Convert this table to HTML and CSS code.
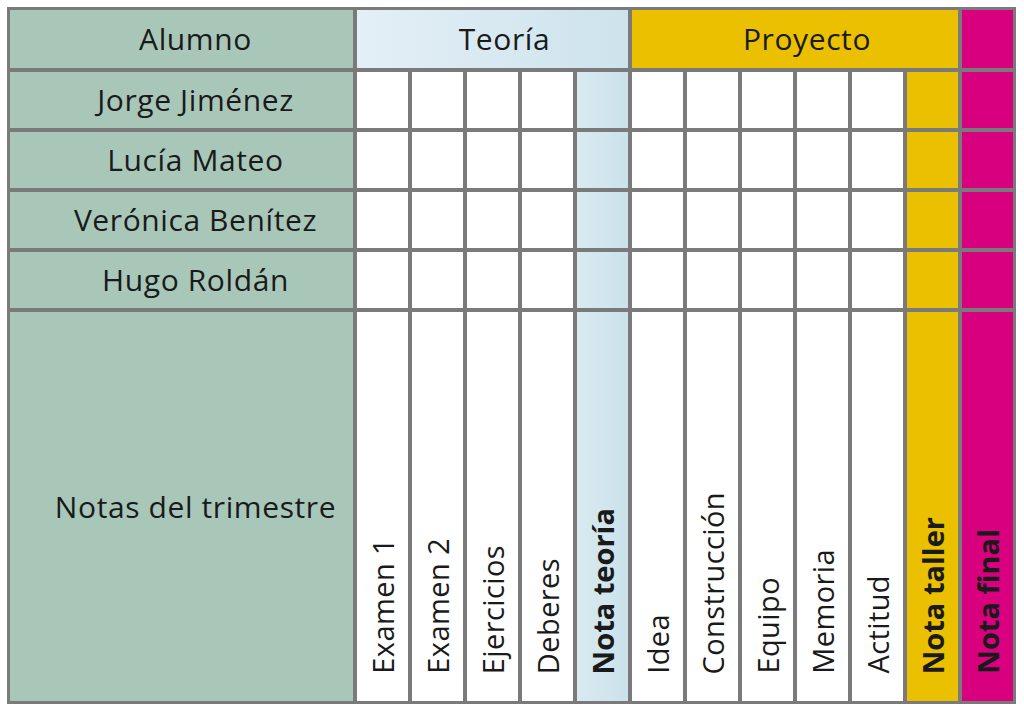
FILE: index.html
```html
<!DOCTYPE html>
<html lang="es">
<head>
<meta charset="utf-8">
<title>Notas del trimestre</title>
<link rel="stylesheet" href="styles.css">
</head>
<body>
<div class="grades">
  <div class="cell name head">Alumno</div>
  <div class="cell teoria-head head">Teoría</div>
  <div class="cell proyecto-head head">Proyecto</div>
  <div class="cell final"></div>

  <div class="cell name">Jorge Jiménez</div>
  <div class="cell"></div><div class="cell"></div><div class="cell"></div><div class="cell"></div>
  <div class="cell teoria"></div>
  <div class="cell"></div><div class="cell"></div><div class="cell"></div><div class="cell"></div><div class="cell"></div>
  <div class="cell taller"></div>
  <div class="cell final"></div>

  <div class="cell name">Lucía Mateo</div>
  <div class="cell"></div><div class="cell"></div><div class="cell"></div><div class="cell"></div>
  <div class="cell teoria"></div>
  <div class="cell"></div><div class="cell"></div><div class="cell"></div><div class="cell"></div><div class="cell"></div>
  <div class="cell taller"></div>
  <div class="cell final"></div>

  <div class="cell name">Verónica Benítez</div>
  <div class="cell"></div><div class="cell"></div><div class="cell"></div><div class="cell"></div>
  <div class="cell teoria"></div>
  <div class="cell"></div><div class="cell"></div><div class="cell"></div><div class="cell"></div><div class="cell"></div>
  <div class="cell taller"></div>
  <div class="cell final"></div>

  <div class="cell name">Hugo Roldán</div>
  <div class="cell"></div><div class="cell"></div><div class="cell"></div><div class="cell"></div>
  <div class="cell teoria"></div>
  <div class="cell"></div><div class="cell"></div><div class="cell"></div><div class="cell"></div><div class="cell"></div>
  <div class="cell taller"></div>
  <div class="cell final"></div>

  <div class="cell name">Notas del trimestre</div>
  <div class="cell vcell"><span class="vtext">Examen 1</span></div>
  <div class="cell vcell"><span class="vtext">Examen 2</span></div>
  <div class="cell vcell"><span class="vtext">Ejercicios</span></div>
  <div class="cell vcell"><span class="vtext">Deberes</span></div>
  <div class="cell vcell teoria"><span class="vtext bold">Nota teoría</span></div>
  <div class="cell vcell"><span class="vtext">Idea</span></div>
  <div class="cell vcell"><span class="vtext">Construcción</span></div>
  <div class="cell vcell"><span class="vtext">Equipo</span></div>
  <div class="cell vcell"><span class="vtext">Memoria</span></div>
  <div class="cell vcell"><span class="vtext">Actitud</span></div>
  <div class="cell vcell taller"><span class="vtext bold">Nota taller</span></div>
  <div class="cell vcell final"><span class="vtext bold">Nota final</span></div>
</div>
</body>
</html>
```
FILE: styles.css
```css
html, body {
  margin: 0;
  padding: 0;
  background: #ffffff;
}
body {
  padding: 7px;
  font-family: "Open Sans", "Noto Sans", sans-serif;
  color: #1a1a1a;
}
.grades {
  display: grid;
  grid-template-columns: 343px repeat(12, 51px);
  grid-template-rows: 58px repeat(4, 56px) 389px;
  gap: 4px;
  padding: 3px;
  width: max-content;
  background: #7a7a7a;
}
.cell {
  background: #ffffff;
}
.name {
  background: #a8c7b9;
  display: flex;
  align-items: center;
  justify-content: center;
  padding-left: 28px;
  font-size: 30px;
  letter-spacing: 0.6px;
  line-height: 1;
}
.head {
  font-size: 30px;
  letter-spacing: 0.6px;
  line-height: 1;
}
.teoria-head {
  grid-column: span 5;
  background: linear-gradient(to right, #e4eff6, #cde3ec);
  display: flex;
  align-items: center;
  justify-content: center;
  padding-left: 24px;
}
.proyecto-head {
  grid-column: span 6;
  background: #ebc000;
  display: flex;
  align-items: center;
  justify-content: center;
  padding-left: 24px;
}
.teoria {
  background: linear-gradient(to right, #d9eaf1, #cbe2eb);
}
.taller {
  background: #ebc000;
}
.final {
  background: #d8007f;
}
.vcell {
  display: flex;
  flex-direction: column;
  justify-content: flex-end;
  align-items: center;
  padding-bottom: 27px;
}
.vtext {
  writing-mode: vertical-rl;
  transform: rotate(180deg);
  font-size: 29px;
  letter-spacing: 0.4px;
  line-height: 1;
  white-space: nowrap;
}
.bold {
  font-weight: 700;
  letter-spacing: 0;
}
```
